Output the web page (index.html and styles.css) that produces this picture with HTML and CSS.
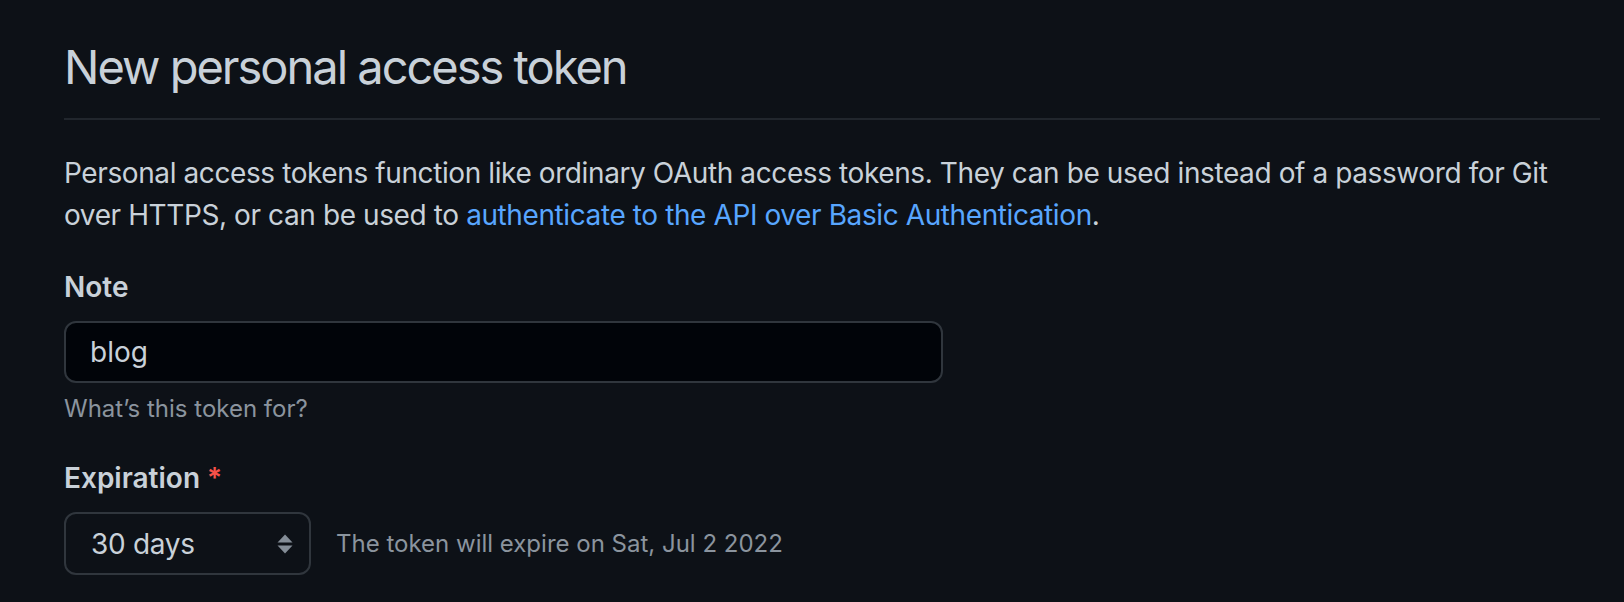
FILE: index.html
```html
<!DOCTYPE html>
<html lang="en">
<head>
<meta charset="utf-8">
<title>New personal access token</title>
<link rel="stylesheet" href="styles.css">
</head>
<body>
<main class="page">
  <div class="subhead">
    <h1 class="subhead-heading">New personal access token</h1>
  </div>
  <p class="intro"><span>Personal access tokens function like ordinary OAuth access tokens. They can be used instead of a password for Git</span> <span>over HTTPS, or can be used to</span> <a class="link" href="#">authenticate to the API over Basic Authentication</a><span>.</span></p>

  <div class="form-group">
    <label class="form-label" for="note">Note</label>
    <input class="form-control note-input" id="note" type="text" value="blog">
    <p class="note">What’s this token for?</p>
  </div>

  <div class="form-group">
    <label class="form-label" for="exp">Expiration <span class="required">*</span></label>
    <div class="expiration-row">
      <div class="select">
        <span class="select-value">30 days</span>
        <svg class="select-arrows" width="16" height="20" viewBox="0 0 16 20" aria-hidden="true">
          <path d="M8 0.5 L15.5 8.5 L0.5 8.5 Z" fill="#848d97"/>
          <path d="M0.5 11.5 L15.5 11.5 L8 19.5 Z" fill="#848d97"/>
        </svg>
      </div>
      <span class="expire-note">The token will expire on Sat, Jul 2 2022</span>
    </div>
  </div>
</main>
</body>
</html>
```
FILE: styles.css
```css
html, body {
  margin: 0;
  padding: 0;
  background: #0d1117;
}
body {
  font-family: Inter, "Noto Sans", "Liberation Sans", sans-serif;
  color: #c9d1d9;
}
.page {
  padding: 31px 24px 0 64px;
}
.subhead {
  border-bottom: 2px solid #21262d;
  padding-bottom: 15px;
  margin-bottom: 32px;
}
.subhead-heading {
  margin: 0;
  font-size: 47px;
  font-weight: 400;
  line-height: 72px;
  letter-spacing: -2px;
  color: #c9d1d9;
}
.intro {
  margin: 0 0 30px;
  font-size: 28px;
  line-height: 42px;
  letter-spacing: -0.4px;
}
.link {
  color: #58a6ff;
  text-decoration: none;
}
.form-group {
  margin-bottom: 30px;
}
.form-label {
  display: block;
  font-size: 28px;
  font-weight: 600;
  line-height: 42px;
  margin-bottom: 13px;
}
.required {
  color: #f85149;
  font-weight: 600;
}
.form-control {
  display: block;
  box-sizing: border-box;
  width: 879px;
  height: 62px;
  padding: 0 24px;
  border: 2px solid #30363d;
  border-radius: 12px;
  background: #010409;
  color: #c9d1d9;
  font-family: inherit;
  font-size: 28px;
  outline: none;
}
.note {
  margin: 8px 0 0;
  font-size: 24px;
  line-height: 36px;
  color: #8b949e;
}
.expiration-row {
  display: flex;
  align-items: center;
  gap: 25px;
}
.select {
  box-sizing: border-box;
  width: 247px;
  height: 63px;
  border: 2px solid #30363d;
  border-radius: 12px;
  background: #0d1117;
  display: flex;
  align-items: center;
  justify-content: space-between;
  padding: 0 16px 0 25px;
  font-size: 28px;
  letter-spacing: -0.3px;
}
.select-arrows {
  display: block;
}
.expire-note {
  font-size: 24px;
  color: #8b949e;
}
```
